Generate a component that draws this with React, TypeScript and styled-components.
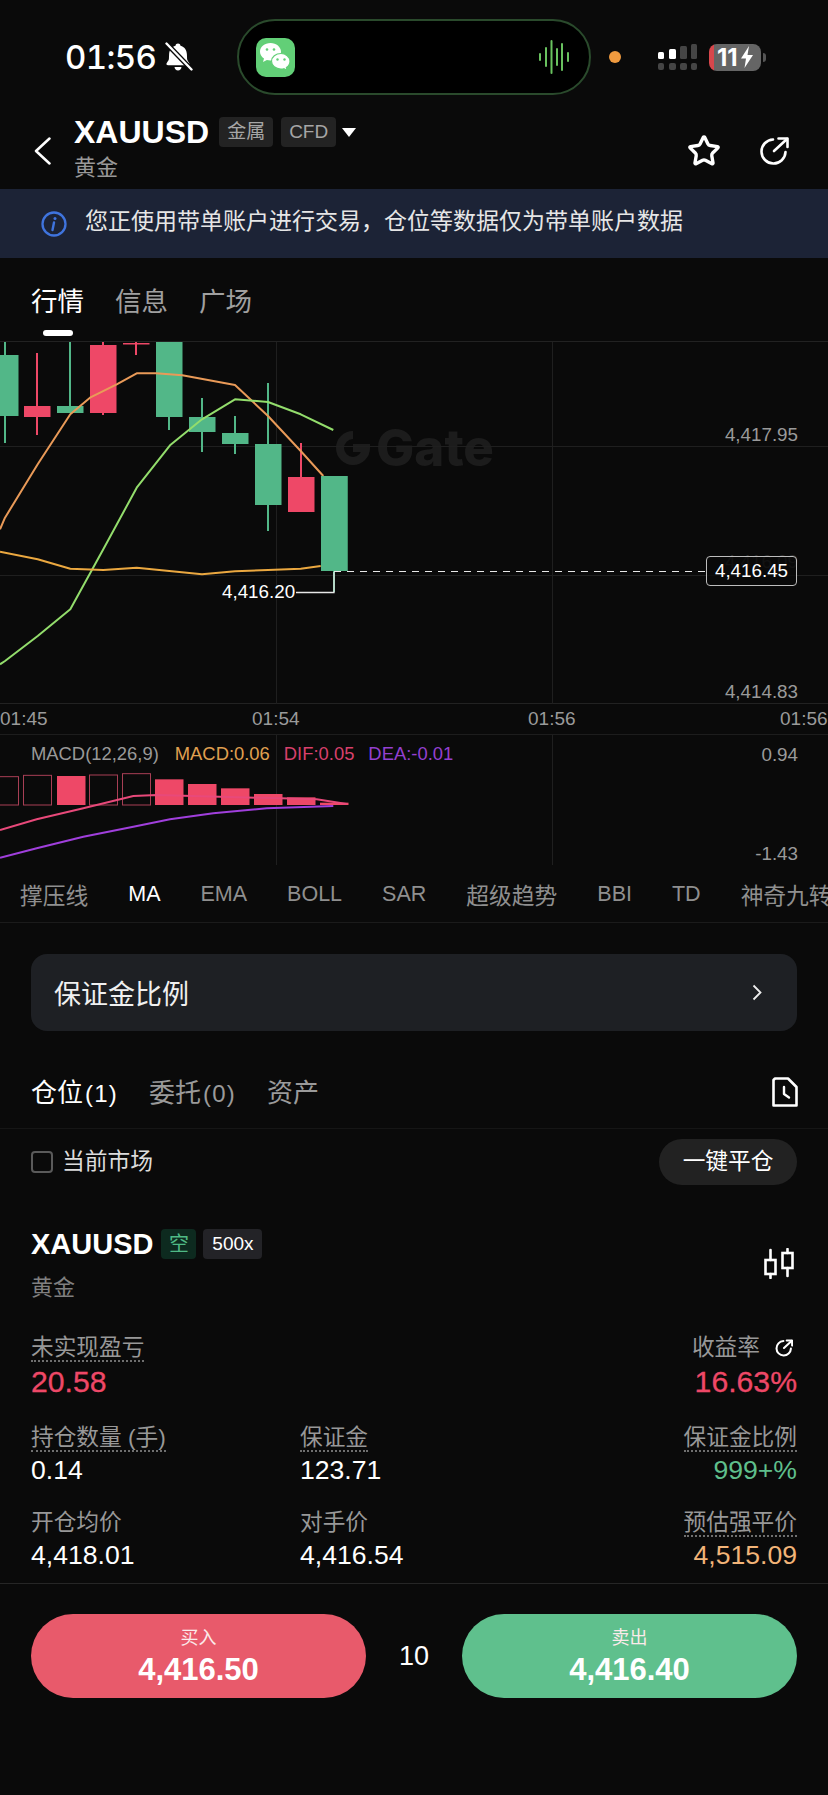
import React from "react";
import styled, { createGlobalStyle } from "styled-components";
import { Star } from "lucide-react";

const SANS = `"Liberation Sans", "Noto Sans CJK SC", sans-serif`;
const GREEN = "#52b788";
const RED = "#ee4867";

const Global = createGlobalStyle`
  html, body { margin: 0; padding: 0; background: #0a0a0a; }
  * { box-sizing: border-box; }
  body { font-family: ${SANS}; color: #fff; }
`;

const Page = styled.div`
  width: 828px;
  height: 1795px;
  overflow: hidden;
  background: #0a0a0a;
`;

/* status bar */
const StatusBar = styled.div`
  height: 114px;
  display: flex;
  align-items: center;
  padding-left: 65px;
`;
const Clock = styled.span`
  font-family: "Inter", sans-serif;
  font-size: 33px;
  font-weight: 500;
  font-feature-settings: "tnum";
  letter-spacing: -0.6px;
  width: 91px;
  white-space: nowrap;
`;
const BellWrap = styled.span`
  display: flex;
  margin-left: 8px;
`;
const Island = styled.div`
  width: 354px;
  height: 76px;
  margin-left: 44px;
  border-radius: 38px;
  background: #000;
  border: 2px solid #2a4a2c;
  display: flex;
  align-items: center;
  justify-content: space-between;
  padding: 0 20px 0 17px;
`;
const WeChatTile = styled.div`
  width: 39px;
  height: 39px;
  border-radius: 10px;
  background: #62cf77;
  display: flex;
  align-items: center;
  justify-content: center;
`;
const OrangeDot = styled.span`
  width: 12px;
  height: 12px;
  border-radius: 50%;
  background: #ef9a3f;
  margin-left: 18px;
`;
const SignalWrap = styled.span`
  display: flex;
  margin-left: 37px;
`;
const Battery = styled.div`
  width: 52px;
  height: 27px;
  margin-left: 12px;
  border-radius: 8px;
  background: linear-gradient(90deg, #d8474c 0 5px, #656565 5px);
  display: flex;
  align-items: center;
  padding-left: 8px;
  gap: 2px;
  font-family: "Inter", sans-serif;
  font-weight: 700;
  font-size: 24px;
  position: relative;
  &::after {
    content: "";
    position: absolute;
    right: -5px;
    top: 9px;
    width: 3px;
    height: 9px;
    border-radius: 0 3px 3px 0;
    background: #555;
  }
`;

/* header */
const Header = styled.div`
  height: 75px;
  display: flex;
  padding: 0 39px 0 34px;
  align-items: flex-start;
`;
const BackWrap = styled.span`
  display: flex;
  margin: 23px 23px 0 0;
`;
const TitleBlock = styled.div`
  flex: 1;
`;
const TitleRow = styled.div`
  display: flex;
  align-items: center;
  height: 36px;
`;
const Title = styled.span`
  font-size: 32px;
  font-weight: 700;
  margin-right: 10px;
`;
const HeadTag = styled.span`
  height: 30px;
  padding: 0 8px;
  margin-right: 8px;
  background: #232323;
  border-radius: 4px;
  color: #a6a6a6;
  font-size: 19px;
  line-height: 30px;
`;
const Caret = styled.span`
  width: 0;
  height: 0;
  border-left: 7px solid transparent;
  border-right: 7px solid transparent;
  border-top: 9px solid #fff;
  margin-left: -2px;
`;
const SubTitle = styled.div`
  font-size: 22px;
  line-height: 36px;
  color: #999;
`;
const HeaderActions = styled.div`
  display: flex;
  align-items: center;
  gap: 38px;
  margin-top: 20px;
`;

/* banner */
const Banner = styled.div`
  height: 69px;
  background: #1c2336;
  display: flex;
  align-items: center;
  padding-left: 41px;
  gap: 18px;
  white-space: nowrap;
`;
const BannerText = styled.span`
  font-size: 23px;
  line-height: 30px;
  color: #e6e6e6;
  margin-bottom: 6px;
`;

/* tabs */
const TabBar = styled.div`
  height: 84px;
  display: flex;
  align-items: center;
  gap: 31px;
  padding-left: 31px;
  border-bottom: 1px solid #222;
`;
const TabItem = styled.span<{ $active?: boolean }>`
  position: relative;
  font-size: 26.5px;
  color: ${(p) => (p.$active ? "#fff" : "#a0a0a0")};
  ${(p) =>
    p.$active &&
    `&::after {
      content: "";
      position: absolute;
      left: 12px;
      top: 50px;
      width: 30px;
      height: 6px;
      border-radius: 3px;
      background: #fff;
    }`}
`;

/* chart */
const ChartArea = styled.div`
  position: relative;
  height: 362px;
  border-bottom: 1px solid #222;
`;
const ChartSvg = styled.svg`
  display: block;
  position: absolute;
  inset: 0;
`;
const Watermark = styled.div`
  position: absolute;
  left: 335px;
  top: 88px;
  display: flex;
  align-items: center;
  gap: 5px;
  color: #1c1c1c;
  font-family: "Inter", sans-serif;
  font-weight: 800;
  font-size: 51px;
  line-height: 36px;
`;
const AxisLabel = styled.span<{ $y: number }>`
  position: absolute;
  right: 30px;
  top: ${(p) => p.$y - 341 - 12}px;
  line-height: 22px;
  font-size: 18.8px;
  color: #9a9a9a;
`;
const FaintLabel = styled(AxisLabel)`
  color: #2c2c2c;
`;
const PriceBox = styled.span`
  position: absolute;
  left: 706px;
  top: 214px;
  width: 91px;
  height: 30px;
  border: 1px solid #bdbdbd;
  border-radius: 4px;
  background: rgba(10, 10, 10, 0.75);
  font-size: 18.8px;
  line-height: 28px;
  text-align: center;
`;
const LowLabel = styled.span`
  position: absolute;
  left: 222px;
  top: 239px;
  font-size: 18.8px;
  line-height: 22px;
`;
const TimeRow = styled.div`
  height: 31px;
  display: grid;
  grid-template-columns: 252px 276px 252px 48px;
  align-items: center;
  font-size: 19px;
  color: #9a9a9a;
  border-bottom: 1px solid #1d1d1d;
`;

/* macd */
const MacdPanel = styled.div`
  position: relative;
  height: 132px;
`;
const Legend = styled.div`
  position: absolute;
  left: 31px;
  top: 8px;
  display: flex;
  gap: 14px;
  font-size: 18.4px;
  line-height: 22px;
  white-space: nowrap;
`;
const LegendItem = styled.span<{ $c: string }>`
  color: ${(p) => p.$c};
  &:first-child {
    margin-right: 2px;
  }
`;
const MacdAxis = styled.span<{ $y: number }>`
  position: absolute;
  right: 30px;
  top: ${(p) => p.$y - 735 - 11}px;
  font-size: 18.8px;
  line-height: 22px;
  color: #9a9a9a;
`;

/* indicators */
const IndicatorRow = styled.div`
  height: 56px;
  display: flex;
  align-items: center;
  gap: 40px;
  padding-left: 20px;
  overflow: hidden;
  white-space: nowrap;
  border-bottom: 1px solid #1b1b1b;
`;
const Indicator = styled.span<{ $active?: boolean; $cjk?: boolean }>`
  color: ${(p) => (p.$active ? "#fff" : "#8f8f8f")};
  font-size: ${(p) => (p.$cjk ? "22.75px" : "21.5px")};
  flex: none;
`;

/* margin card */
const MarginCard = styled.div`
  height: 77px;
  margin: 31px 31px 0;
  padding: 0 35px 0 23px;
  border-radius: 16px;
  background: #1e2024;
  display: flex;
  align-items: center;
  justify-content: space-between;
  font-size: 27px;
  color: #f0f0f0;
`;

/* positions tabs */
const PositionTabs = styled.div`
  height: 98px;
  padding: 24px 30px 0 31px;
  display: flex;
  align-items: center;
  border-bottom: 1px solid #161616;
`;
const PosTab = styled.span<{ $active?: boolean }>`
  font-size: 26px;
  padding-bottom: 3px;
  color: ${(p) => (p.$active ? "#fff" : "#9a9a9a")};
  margin-right: 31px;
`;
const TabNum = styled.span`
  font-size: 24px;
  letter-spacing: 1.2px;
  margin-left: 2px;
`;
const Spacer = styled.span`
  flex: 1;
`;
const FilterRow = styled.div`
  display: flex;
  align-items: center;
  padding: 10px 31px 0;
`;
const Check = styled.span`
  width: 22px;
  height: 22px;
  border: 2px solid #5a5a5a;
  border-radius: 4px;
  margin-right: 9px;
`;
const FilterText = styled.span`
  font-size: 22.75px;
  line-height: 30px;
  padding-bottom: 2px;
  color: #dcdcdc;
  flex: 1;
`;
const CloseAll = styled.span`
  width: 138px;
  height: 46px;
  border-radius: 23px;
  background: #222;
  font-size: 22.7px;
  line-height: 45px;
  text-align: center;
`;

/* position */
const PositionHead = styled.div`
  display: flex;
  align-items: center;
  justify-content: space-between;
  margin-top: 44px;
  padding: 0 34px 0 31px;
`;
const NameRow = styled.div`
  display: flex;
  align-items: center;
  height: 30px;
`;
const PosName = styled.span`
  font-size: 29px;
  font-weight: 700;
  margin-right: 8px;
`;
const SideTag = styled.span`
  width: 35px;
  height: 30px;
  background: #0d2a1f;
  color: #4fb985;
  border-radius: 4px;
  font-size: 20px;
  line-height: 30px;
  text-align: center;
  margin-right: 7px;
`;
const LevTag = styled.span`
  width: 59px;
  height: 30px;
  background: #232327;
  border-radius: 4px;
  font-size: 19px;
  line-height: 30px;
  text-align: center;
`;
const PosSub = styled.div`
  margin-top: 14px;
  height: 30px;
  line-height: 30px;
  font-size: 22px;
  color: #808080;
`;
const CandleIconWrap = styled.span`
  display: flex;
  margin-bottom: 5px;
`;
const PnlRow = styled.div`
  display: flex;
  justify-content: space-between;
  padding: 0 31px;
  margin-top: 31px;
`;
const MetricGrid = styled.div`
  display: grid;
  grid-template-columns: 269px 1fr auto;
  row-gap: 23px;
  padding: 0 31px;
  margin-top: 24px;
`;
const Metric = styled.div<{ $right?: boolean }>`
  display: flex;
  flex-direction: column;
  align-items: ${(p) => (p.$right ? "flex-end" : "flex-start")};
`;
const LabelRow = styled.div`
  display: flex;
  align-items: center;
  gap: 15px;
  padding-right: 4px;
`;
const MetricLabel = styled.span<{ $dotted?: boolean }>`
  height: 28px;
  line-height: 27px;
  font-size: 22.7px;
  color: #989898;
  white-space: pre;
  border-bottom: 2px dotted ${(p) => (p.$dotted ? "#6f6f6f" : "transparent")};
`;
const BigValue = styled.span<{ $c: string }>`
  height: 36px;
  line-height: 36px;
  margin-top: 2px;
  font-size: 30.2px;
  color: ${(p) => p.$c};
  -webkit-text-stroke: 0.3px ${(p) => p.$c};
`;
const Value = styled.span<{ $c?: string }>`
  height: 32px;
  line-height: 32px;
  margin-top: 2px;
  font-size: 26.6px;
  color: ${(p) => p.$c ?? "#fff"};
`;
const Divider = styled.div`
  height: 1px;
  margin-top: 12px;
  background: #262626;
`;
const ActionBar = styled.div`
  display: flex;
  align-items: center;
  justify-content: space-between;
  padding: 0 31px;
  margin-top: 30px;
`;
const TradeButton = styled.div<{ $c: string }>`
  width: 335px;
  height: 84px;
  border-radius: 42px;
  background: ${(p) => p.$c};
  display: flex;
  flex-direction: column;
  align-items: center;
  padding-top: 12px;
`;
const TradeLabel = styled.span`
  font-size: 18px;
  line-height: 24px;
  color: #fbeaea;
`;
const TradePrice = styled.span`
  font-size: 31px;
  line-height: 36px;
  margin-top: 2px;
  font-weight: 700;
`;
const Qty = styled.span`
  font-size: 27px;
`;

/* chart data, in page coordinates */
type Candle = { x: number; top: number; bottom: number; hi: number; lo: number; up: boolean };
const CANDLES: Candle[] = [
  { x: -8, top: 354, bottom: 415, hi: 341, lo: 442, up: true },
  { x: 24, top: 405, bottom: 416, hi: 352, lo: 434, up: false },
  { x: 57, top: 405, bottom: 412, hi: 341, lo: 412, up: true },
  { x: 90, top: 344, bottom: 412, hi: 341, lo: 414, up: false },
  { x: 123, top: 342, bottom: 343.5, hi: 341, lo: 354, up: false },
  { x: 156, top: 341, bottom: 416, hi: 341, lo: 429, up: true },
  { x: 189, top: 416, bottom: 431, hi: 397, lo: 451, up: true },
  { x: 222, top: 432, bottom: 443, hi: 415, lo: 453, up: true },
  { x: 255, top: 443, bottom: 504, hi: 382, lo: 530, up: true },
  { x: 288, top: 476, bottom: 511, hi: 442, lo: 476, up: false },
  { x: 321, top: 475, bottom: 570, hi: 475, lo: 591, up: true },
];

const toPath = (pts: number[][], oy: number) =>
  pts.map(([x, y], i) => `${i ? "L" : "M"}${(x / 3).toFixed(1)} ${(y / 3 + oy).toFixed(1)}`).join(" ");

const MA_ORANGE = [[0,580],[15,545],[113,385],[211,235],[270,185],[350,145],[410,112],[468,112],[547,118],[705,147],[804,240],[902,345],[970,420]];
const MA_GREEN = [[0,985],[15,975],[113,900],[211,820],[310,640],[410,455],[510,328],[606,250],[705,190],[804,198],[902,235],[1000,282]];
const MA_YELLOW = [[0,647],[113,670],[211,698],[310,702],[410,695],[508,705],[606,715],[705,706],[804,702],[902,698],[962,690]];
const DIF = [[0,300],[110,268],[250,235],[400,198],[470,195],[950,208],[1040,222]];
const DEA = [[0,383],[110,355],[250,320],[400,290],[510,268],[640,250],[800,235],[1000,228]];

type Bar = { x: number; top: number; hollow?: boolean };
const MACD_BARS: Bar[] = [
  { x: -10, top: 140, hollow: true },
  { x: 23, top: 136, hollow: true },
  { x: 57, top: 138 },
  { x: 89, top: 135, hollow: true },
  { x: 122, top: 131, hollow: true },
  { x: 155, top: 148 },
  { x: 188, top: 162 },
  { x: 221, top: 175 },
  { x: 254, top: 192 },
  { x: 287, top: 202 },
  { x: 320, top: 218 },
];

const PriceChart = () => (
  <ChartSvg width="828" height="362" viewBox="0 341 828 362">
    <g stroke="#1f1f1f" strokeWidth="1">
      <line x1="0" x2="828" y1="445.5" y2="445.5" />
      <line x1="0" x2="828" y1="574.5" y2="574.5" />
      <line x1="276.5" x2="276.5" y1="341" y2="703" />
      <line x1="552.5" x2="552.5" y1="341" y2="703" />
    </g>
    {CANDLES.map((c) => (
      <g key={c.x} fill={c.up ? GREEN : RED}>
        <rect x={c.x + 12} y={c.hi} width="2" height={c.lo - c.hi} />
        <rect x={c.x} y={c.top} width="26.5" height={c.bottom - c.top} />
      </g>
    ))}
    <g fill="none" strokeWidth="2" strokeLinejoin="round">
      <path d={toPath(MA_ORANGE, 335)} stroke="#e99a58" />
      <path d={toPath(MA_GREEN, 335)} stroke="#93dd6c" />
      <path d={toPath(MA_YELLOW, 335)} stroke="#eba840" />
    </g>
    <rect x="321" y="475" width="26.5" height="95" fill={GREEN} />
    <line x1="334" x2="706" y1="570.5" y2="570.5" stroke="#e8e8e8" strokeWidth="1.2" strokeDasharray="7 6" />
    <path d="M334 571 V591.5 H296" fill="none" stroke="#e8e8e8" strokeWidth="1.3" />
  </ChartSvg>
);

const MacdChart = () => (
  <ChartSvg width="828" height="132" viewBox="0 735 828 132">
    <g stroke="#1f1f1f" strokeWidth="1">
      <line x1="276.5" x2="276.5" y1="735" y2="865" />
      <line x1="552.5" x2="552.5" y1="735" y2="865" />
    </g>
    {MACD_BARS.map((b) => {
      const top = 730 + b.top / 3;
      return b.hollow ? (
        <rect key={b.x} x={b.x + 0.5} y={top} width="28" height={805 - top} fill="none" stroke="#a83f55" strokeWidth="1" />
      ) : (
        <rect key={b.x} x={b.x} y={top} width="28.5" height={805 - top} fill={RED} />
      );
    })}
    <path d={toPath(DIF, 730)} fill="none" stroke="#e8497a" strokeWidth="2" />
    <path d={toPath(DEA, 730)} fill="none" stroke="#a03fdc" strokeWidth="2" />
  </ChartSvg>
);

const BellOffFilled = () => (
  <svg width="29" height="30" viewBox="0 0 29 30">
    <path d="M14 1.500c1.400 0 2.300.9 2.500 2.200 4 1 6.200 4.300 6.400 8.600l.2 4.700c.1 1.700 1.900 3.200 2.300 4.600.3 1-.4 1.700-1.500 1.700H4c-1.100 0-1.800-.7-1.500-1.700.5-1.500 2.300-2.900 2.400-4.600l.2-4.700c.2-4.300 2.400-7.600 6.400-8.600.2-1.300 1.100-2.200 2.500-2.200z" fill="#fff" />
    <path d="M10.500 25h7c-.2 2-1.600 3.500-3.500 3.500S10.700 27 10.500 25z" fill="#fff" />
    <line x1="2" y1="1" x2="28" y2="28" stroke="#0a0a0a" strokeWidth="5" />
    <line x1="2.500" y1="1.500" x2="27.500" y2="27.500" stroke="#fff" strokeWidth="2.400" strokeLinecap="round" />
  </svg>
);

const WeChatIcon = () => (
  <svg width="33" height="31" viewBox="0 0 33 31">
    <path d="M11.500 1C5.700 1 1 4.900 1 9.800c0 2.800 1.600 5.200 4 6.800l-1 3.400 3.900-2c1.100.3 2.300.5 3.600.5 5.800 0 10.500-3.900 10.500-8.700S17.300 1 11.500 1z" fill="#fff" />
    <path d="M22 11.500c-5.300 0-9.500 3.500-9.500 7.800s4.200 7.800 9.500 7.800c1 0 2-.1 2.900-.4l3.400 1.900-.9-3c2.200-1.400 3.600-3.700 3.600-6.300 0-4.300-4.300-7.800-9-7.800z" fill="#fff" stroke="#62cf77" strokeWidth="1.200" />
    <g fill="#62cf77">
      <circle cx="8" cy="7.500" r="1.300" />
      <circle cx="15" cy="7.500" r="1.300" />
      <circle cx="18.500" cy="17.500" r="1.200" />
      <circle cx="25.500" cy="17.500" r="1.200" />
    </g>
  </svg>
);

const WaveIcon = () => (
  <svg width="30" height="34" viewBox="0 0 30 34" stroke="#69c25f" strokeWidth="2" strokeLinecap="round">
    <line x1="1" x2="1" y1="14" y2="20" />
    <line x1="7" x2="7" y1="8" y2="26" />
    <line x1="12.500" x2="12.500" y1="1" y2="33" />
    <line x1="18" x2="18" y1="9" y2="25" />
    <line x1="23" x2="23" y1="4" y2="30" />
    <line x1="29" x2="29" y1="13" y2="21" />
  </svg>
);

const SignalIcon = () => (
  <svg width="39" height="26" viewBox="0 0 39 26">
    <g fill="#fff">
      <rect x="0" y="8" width="6" height="7" rx="1.500" />
      <rect x="11" y="5" width="7" height="10" rx="1.500" />
    </g>
    <g fill="#454545">
      <rect x="22" y="2" width="7" height="13" rx="1.500" />
      <rect x="33" y="0" width="6" height="15" rx="1.500" />
      <rect x="0" y="19" width="6" height="7" rx="2" />
      <rect x="11" y="19" width="7" height="7" rx="2" />
      <rect x="22" y="19" width="7" height="7" rx="2" />
      <rect x="33" y="19" width="6" height="7" rx="2" />
    </g>
  </svg>
);

const BoltIcon = () => (
  <svg width="14" height="22" viewBox="0 0 14 22">
    <path d="M9 0 1 12.500h5L4.500 22 13 9H7.500z" fill="#fff" />
  </svg>
);

const BackIcon = () => (
  <svg width="17" height="28" viewBox="0 0 17 28">
    <path d="M15.500 1.500 2 14l13.500 12.500" fill="none" stroke="#fff" strokeWidth="2.500" strokeLinecap="round" strokeLinejoin="round" />
  </svg>
);

const ShareIcon = ({ size, stroke }: { size: number; stroke: number }) => (
  <svg width={size} height={size} viewBox="0 0 30 30" fill="none" stroke="#fff" strokeWidth={stroke} strokeLinecap="round" strokeLinejoin="round">
    <path d="M14 3.500A12 12 0 1 0 26.500 16" />
    <path d="M15 15 28 3" />
    <path d="M19.500 2.500H28.500V11" />
  </svg>
);

const InfoIcon = () => (
  <svg width="26" height="26" viewBox="0 0 26 26">
    <circle cx="13" cy="13" r="11.500" fill="none" stroke="#3f74de" strokeWidth="2.300" />
    <circle cx="14" cy="7.500" r="1.500" fill="#3f74de" />
    <path d="M13 11.500 11.500 19" stroke="#3f74de" strokeWidth="2.400" strokeLinecap="round" />
  </svg>
);

const GateLogo = () => (
  <svg width="36" height="34" viewBox="0 0 36 34">
    <path d="M18 4a13 13 0 1 0 13 13H18" fill="none" stroke="#1c1c1c" strokeWidth="8" />
  </svg>
);

const ChevronRight = () => (
  <svg width="10" height="17" viewBox="0 0 10 17">
    <path d="M1.500 1.500 8.500 8.500 1.500 15.500" fill="none" stroke="#eee" strokeWidth="1.800" />
  </svg>
);

const DocClockIcon = () => (
  <svg width="26" height="30" viewBox="0 0 26 30" fill="none" stroke="#fff" strokeLinejoin="round">
    <path d="M3 1.500H16L24.500 10V28.500H1.500V3z" strokeWidth="2.600" />
    <path d="M12 10V17L17 20.500" strokeWidth="2.400" strokeLinecap="round" />
  </svg>
);

const CandleIcon = () => (
  <svg width="30" height="31" viewBox="0 0 30 31" fill="none" stroke="#fff" strokeWidth="2.600" strokeLinecap="round">
    <rect x="1.500" y="12" width="10" height="14" />
    <line x1="6.500" x2="6.500" y1="2" y2="12" />
    <line x1="6.500" x2="6.500" y1="26" y2="30" />
    <rect x="18.500" y="5" width="10" height="15" />
    <line x1="23.500" x2="23.500" y1="1" y2="5" />
    <line x1="23.500" x2="23.500" y1="20" y2="28" />
  </svg>
);

const INDICATORS = ["撑压线", "MA", "EMA", "BOLL", "SAR", "超级趋势", "BBI", "TD", "神奇九转"];

export default function App() {
  return (
    <Page>
      <Global />
      <StatusBar>
        <Clock>01:56</Clock>
        <BellWrap><BellOffFilled /></BellWrap>
        <Island>
          <WeChatTile><WeChatIcon /></WeChatTile>
          <WaveIcon />
        </Island>
        <OrangeDot />
        <SignalWrap><SignalIcon /></SignalWrap>
        <Battery>
          11
          <BoltIcon />
        </Battery>
      </StatusBar>

      <Header>
        <BackWrap><BackIcon /></BackWrap>
        <TitleBlock>
          <TitleRow>
            <Title>XAUUSD</Title>
            <HeadTag>金属</HeadTag>
            <HeadTag>CFD</HeadTag>
            <Caret />
          </TitleRow>
          <SubTitle>黄金</SubTitle>
        </TitleBlock>
        <HeaderActions>
          <Star size={34} color="#fff" strokeWidth={2.4} />
          <ShareIcon size={30} stroke={2.6} />
        </HeaderActions>
      </Header>

      <Banner>
        <InfoIcon />
        <BannerText>您正使用带单账户进行交易，仓位等数据仅为带单账户数据</BannerText>
      </Banner>

      <TabBar>
        <TabItem $active>行情</TabItem>
        <TabItem>信息</TabItem>
        <TabItem>广场</TabItem>
      </TabBar>

      <ChartArea>
        <Watermark>
          <GateLogo />
          Gate
        </Watermark>
        <PriceChart />
        <AxisLabel $y={435}>4,417.95</AxisLabel>
        <FaintLabel $y={562}>4,416.09</FaintLabel>
        <AxisLabel $y={692}>4,414.83</AxisLabel>
        <PriceBox>4,416.45</PriceBox>
        <LowLabel>4,416.20</LowLabel>
      </ChartArea>

      <TimeRow>
        <span>01:45</span>
        <span>01:54</span>
        <span>01:56</span>
        <span>01:56</span>
      </TimeRow>

      <MacdPanel>
        <MacdChart />
        <Legend>
          <LegendItem $c="#999">MACD(12,26,9)</LegendItem>
          <LegendItem $c="#e0a050">MACD:0.06</LegendItem>
          <LegendItem $c="#d8406c">DIF:0.05</LegendItem>
          <LegendItem $c="#9440d0">DEA:-0.01</LegendItem>
        </Legend>
        <MacdAxis $y={755}>0.94</MacdAxis>
        <MacdAxis $y={854}>-1.43</MacdAxis>
      </MacdPanel>

      <IndicatorRow>
        {INDICATORS.map((n) => (
          <Indicator key={n} $active={n === "MA"} $cjk={/[^A-Z]/.test(n)}>{n}</Indicator>
        ))}
      </IndicatorRow>

      <MarginCard>
        保证金比例
        <ChevronRight />
      </MarginCard>

      <PositionTabs>
        <PosTab $active>仓位<TabNum>(1)</TabNum></PosTab>
        <PosTab>委托<TabNum>(0)</TabNum></PosTab>
        <PosTab>资产</PosTab>
        <Spacer />
        <DocClockIcon />
      </PositionTabs>

      <FilterRow>
        <Check />
        <FilterText>当前市场</FilterText>
        <CloseAll>一键平仓</CloseAll>
      </FilterRow>

      <PositionHead>
        <div>
          <NameRow>
            <PosName>XAUUSD</PosName>
            <SideTag>空</SideTag>
            <LevTag>500x</LevTag>
          </NameRow>
          <PosSub>黄金</PosSub>
        </div>
        <CandleIconWrap><CandleIcon /></CandleIconWrap>
      </PositionHead>

      <PnlRow>
        <Metric>
          <MetricLabel $dotted>未实现盈亏</MetricLabel>
          <BigValue $c={RED}>20.58</BigValue>
        </Metric>
        <Metric $right>
          <LabelRow>
            <MetricLabel>收益率</MetricLabel>
            <ShareIcon size={18} stroke={3.4} />
          </LabelRow>
          <BigValue $c={RED}>16.63%</BigValue>
        </Metric>
      </PnlRow>

      <MetricGrid>
        <Metric>
          <MetricLabel $dotted>持仓数量 (手)</MetricLabel>
          <Value>0.14</Value>
        </Metric>
        <Metric>
          <MetricLabel $dotted>保证金</MetricLabel>
          <Value>123.71</Value>
        </Metric>
        <Metric $right>
          <MetricLabel $dotted>保证金比例</MetricLabel>
          <Value $c="#5fbf8c">999+%</Value>
        </Metric>
        <Metric>
          <MetricLabel>开仓均价</MetricLabel>
          <Value>4,418.01</Value>
        </Metric>
        <Metric>
          <MetricLabel>对手价</MetricLabel>
          <Value>4,416.54</Value>
        </Metric>
        <Metric $right>
          <MetricLabel $dotted>预估强平价</MetricLabel>
          <Value $c="#f2b478">4,515.09</Value>
        </Metric>
      </MetricGrid>

      <Divider />

      <ActionBar>
        <TradeButton $c="#e85a6b">
          <TradeLabel>买入</TradeLabel>
          <TradePrice>4,416.50</TradePrice>
        </TradeButton>
        <Qty>10</Qty>
        <TradeButton $c="#5fc08d">
          <TradeLabel>卖出</TradeLabel>
          <TradePrice>4,416.40</TradePrice>
        </TradeButton>
      </ActionBar>
    </Page>
  );
}
